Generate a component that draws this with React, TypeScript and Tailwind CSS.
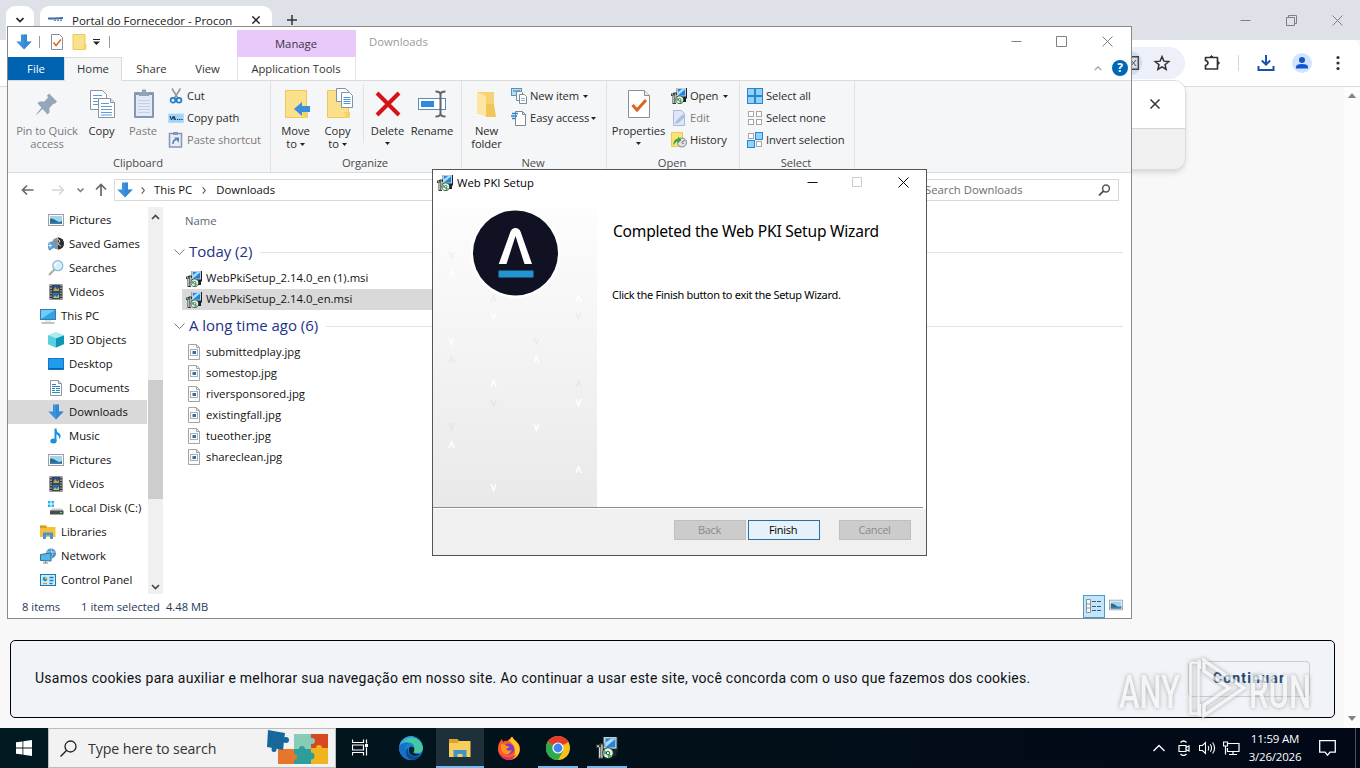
import React from "react";
import type { ReactNode } from "react";

type IconProps = { className?: string };

const MsiIcon = ({ className = "size-4" }: IconProps) => (
  <svg viewBox="0 0 16 16" className={className}>
    <path d="M5.500 0H16v10.500h-1V14h-3V9.500H5.500z" fill="#18242e" />
    <path d="M5.500 0H15v8.500H5.500z" fill="#c3ccd3" />
    <path d="M7 1h7v6.500H7z" fill="#1d86d8" />
    <path d="M7 7.500V4L11 1h3v.5z" fill="#a5dcff" />
    <path d="M0 5.500h1.500L3 4.500h3V7H5v9H1.500V8H0z" fill="#30383a" />
    <path d="M.8 6.200h1.400v1H.8zM2.200 7.500h1V15h-1zM3.800 5.500h1V15h-1z" fill="#d5dad4" />
    <circle cx="8.700" cy="11.700" r="4.200" fill="#27452f" />
    <circle cx="8.700" cy="11.700" r="3.500" fill="#dcefe0" />
    <path d="M8.700 11.700 6 9.500a3.500 3.500 0 0 0-.5 3.500zM8.700 11.700l2.800 2.100a3.500 3.500 0 0 1-2.800 1.400z" fill="#4fae6b" />
    <circle cx="8.700" cy="11.700" r="1.200" fill="#fff" stroke="#27452f" strokeWidth=".7" />
  </svg>
);

const DownArrow = ({ className = "size-4" }: IconProps) => (
  <svg viewBox="0 0 16 16" className={className}>
    <path d="M5 .5h6v7h4.700L8 15.500.3 7.500H5z" fill="#3a92dc" />
    <path d="M8 .5h3v7h4.700L8 15.500z" fill="#2f80cb" opacity=".5" />
  </svg>
);

const PictureIcon = ({ className = "size-4" }: IconProps) => (
  <svg viewBox="0 0 16 16" className={className}>
    <rect x=".5" y="2.500" width="15" height="11" fill="#fff" stroke="#9aa0a6" />
    <rect x="2" y="4" width="12" height="8" fill="#9fd4f5" />
    <path d="M2 6.500Q5 6 8 8.500T14 9v3H2z" fill="#2d6f78" />
    <path d="M2 10.500h12V12H2z" fill="#3a7fc4" />
  </svg>
);

const VideoIcon = () => (
  <svg viewBox="0 0 16 16" className="size-4">
    <rect x="1.500" y=".5" width="13" height="15" fill="#333" />
    <path d="M3 1v14M13 1v14" stroke="#dcdcdc" strokeWidth="1.200" strokeDasharray="1.300 1.300" />
    <rect x="4.500" y="1.500" width="7" height="6" fill="#27538f" />
    <rect x="4.500" y="8.500" width="7" height="6" fill="#2f6da8" />
    <path d="M5 7 7.500 3 9 5.500 11 4V7z" fill="#c9a63c" />
    <path d="M5 14 7 11.500 9 13 11 10.500V14z" fill="#c9b95c" />
  </svg>
);

const GamesIcon = () => (
  <svg viewBox="0 0 16 16" className="size-4">
    <circle cx="10" cy="7.500" r="6" fill="#8c9094" />
    <path d="M10 1.500a6 6 0 0 1 0 12z" fill="#2b2d30" />
    <path d="M9 2.500 12 5l-2 3 3 2" stroke="#d3d8db" fill="none" />
    <path d="M0 8q1-3 4-2.500l3 1 1 6-2-.5-2 1-2 1.500q-2.500 0-2-6.500z" fill="#5b9fd0" />
    <path d="M2 7.500v4M.5 9.500h3.500" stroke="#e4f3fc" />
  </svg>
);

const SearchFolderIcon = () => (
  <svg viewBox="0 0 16 16" className="size-4">
    <path d="M6.500 9.500 1 15" stroke="#a9a9a9" strokeWidth="2" />
    <circle cx="9.800" cy="5.700" r="5" fill="#d7effc" stroke="#8ab4cf" strokeWidth="1.200" />
    <path d="M7 6a3 3 0 0 1 3-3" stroke="#fff" strokeWidth="1.200" fill="none" />
  </svg>
);

const PcIcon = () => (
  <svg viewBox="0 0 16 16" className="size-4">
    <rect x=".5" y="1.500" width="15" height="10" fill="#2fa3e6" stroke="#3a7ca8" />
    <path d="M1 2h14L1 11z" fill="#6ccbf8" />
    <path d="M1.500 15h13" stroke="#7b8b96" />
    <path d="M5 13h6" stroke="#c5cdd2" />
  </svg>
);

const CubeIcon = () => (
  <svg viewBox="0 0 16 16" className="size-4">
    <path d="M0 3.500 8 .5l8 3V12l-8 3.500L0 12z" fill="#2bb8cf" />
    <path d="M0 3.500 8 .5l8 3L8 6.500z" fill="#aeeaf0" />
    <path d="M0 3.500 8 6.500v9L0 12z" fill="#5ad0de" />
    <path d="M16 3.500 8 6.500v9l8-3.500z" fill="#0a98b4" />
  </svg>
);

const DesktopIcon = () => (
  <svg viewBox="0 0 16 16" className="size-4">
    <rect x=".5" y="2.500" width="15" height="11" fill="#1e9df0" stroke="#1877c0" />
    <path d="M1 12.500h14" stroke="#0b5ea8" />
  </svg>
);

const DocIcon = () => (
  <svg viewBox="0 0 16 16" className="size-4">
    <path d="M2.500.5h8l3 3v12h-11z" fill="#fff" stroke="#8f989e" />
    <path d="M4 4.500h4M4 6.500h8M4 8.500h3M8 8.500h4M4 10.500h3M8 10.500h4M4 12.500h8" stroke="#2a86c4" />
    <path d="M10.500.5v3h3" fill="#d7dde1" stroke="#8f989e" />
  </svg>
);

const MusicIcon = () => (
  <svg viewBox="0 0 16 16" className="size-4">
    <path d="M7.500 .5v12" stroke="#1e8fe0" strokeWidth="2" />
    <ellipse cx="5.500" cy="13" rx="3.200" ry="2.500" fill="#1e8fe0" />
    <path d="M8 .5q.5 3.500 3.500 5Q14 8 11 11.500 12 8 8 6z" fill="#1e8fe0" />
  </svg>
);

const DiskIcon = () => (
  <svg viewBox="0 0 16 16" className="size-4">
    <path d="M0 1h2.500v2.500H0zM3.500 1H6v2.500H3.500zM0 4.500h2.500V7H0zM3.500 4.500H6V7H3.500z" fill="#25b5e8" />
    <path d="M4 8.500h10l1.500 2.500H2z" fill="#c9cccf" />
    <rect x="2" y="10.500" width="13.500" height="4" fill="#4a4d50" />
    <path d="M12 12.500h2" stroke="#5fe36a" />
  </svg>
);

const LibraryIcon = () => (
  <svg viewBox="0 0 16 16" className="size-4">
    <path d="M0 1.500h6l1 1.500h8.500v10H0z" fill="#f5c13a" />
    <path d="M0 1.500h6l1 1.500-1 1H0z" fill="#dd9a1c" />
    <path d="M3 15V8.500h10V15h-3v-3.500H6V15z" fill="#4795cf" />
  </svg>
);

const NetworkIcon = () => (
  <svg viewBox="0 0 16 16" className="size-4">
    <circle cx="11" cy="5.500" r="5" fill="#4c93c4" />
    <path d="M11 .5q3 5 0 10M6.500 4h9" stroke="#a8d8f2" fill="none" />
    <path d="M.5 6.500 11 5v8L.5 12.500z" fill="#53b6ea" stroke="#39718f" />
    <path d="M3 15h5M5.500 12.500V15" stroke="#6f8592" />
  </svg>
);

const ControlIcon = () => (
  <svg viewBox="0 0 16 16" className="size-4">
    <rect x=".5" y="2.500" width="15" height="11" fill="#c8ecfb" stroke="#1a7bb9" />
    <circle cx="5" cy="7" r="2.300" fill="#2492d4" />
    <path d="M5 7V4.700A2.300 2.300 0 0 1 7.300 7z" fill="#f6b73c" />
    <path d="M9.500 5.500h4M9.500 8.500h4" stroke="#1a7bb9" strokeWidth="1.300" />
    <path d="M3 11.500h4" stroke="#f08b2c" strokeWidth="1.300" />
    <path d="M9.500 11.500h3" stroke="#1a7bb9" strokeWidth="1.300" />
  </svg>
);

const JpgIcon = () => (
  <svg viewBox="0 0 16 16" className="mb-px size-4">
    <path d="M2.500.5h8l3 3v12h-11z" fill="#fdfdfd" stroke="#a4a4a4" />
    <path d="M10.500.5v3h3" fill="none" stroke="#a4a4a4" />
    <rect x="4.500" y="5.500" width="7" height="6" fill="#fff" stroke="#9fb2c4" />
    <rect x="6.500" y="7" width="3.500" height="3" fill="#3d6c9c" />
  </svg>
);

const CaretDown = ({ className = "" }: IconProps) => (
  <svg viewBox="0 0 5 3" className={`inline-block h-[3px] w-[5px] ${className}`}>
    <path d="M0 0h5L2.500 3z" fill="#222" />
  </svg>
);

const PinIcon = () => (
  <svg viewBox="0 0 32 32" className="size-8">
    <path d="M18 5.500 26 13.500 23.500 16 22.500 15.500 18.500 20 18.500 24.500 16.500 26.500 11.500 21 6 26.500 5 27 5.500 26 10.500 19.500 6.500 15.500 8.500 13.500 13.500 13.500 17 9.500 16 7.500z" fill="#97a5bb" />
  </svg>
);

const CopyIcon = () => (
  <svg viewBox="0 0 32 32" className="size-8">
    <path d="M4.500 2.500h12l4 4v15h-16z" fill="#fff" stroke="#8b939d" />
    <path d="M7 7.500h9M7 10.500h9M7 13.500h9M7 16.500h6" stroke="#5b9bdc" />
    <path d="M12.500 10.500h12l4 4v15h-16z" fill="#fff" stroke="#8b939d" />
    <path d="M24.500 10.500v4h4" fill="#e3e7eb" stroke="#8b939d" />
    <path d="M15 15.500h8M15 18.500h11M15 21.500h11M15 24.500h11M15 27h11" stroke="#5b9bdc" />
  </svg>
);

const PasteIcon = () => (
  <svg viewBox="0 0 32 32" className="size-8">
    <rect x="7" y="4" width="20" height="26" rx="1" fill="#8797b2" />
    <rect x="9" y="7" width="16" height="21" fill="#e3eaf6" />
    <path d="M12 8V4h3V1.500h4V4h3v4z" fill="#95a2b6" />
    <path d="M11 12.500h12M11 15.500h12M11 18.500h12M11 21.500h12M11 24.500h12" stroke="#c3d0e6" />
  </svg>
);

const FolderBase = ({ children }: { children?: ReactNode }) => (
  <svg viewBox="0 0 32 32" className="size-8">
    <path d="M5.500 2.500h21v27h-21z" fill="#fbe08b" stroke="#edc75c" />
    <path d="M22 24h6v6h-4z" fill="#f6d16a" />
    {children}
  </svg>
);

const DeleteIcon = () => (
  <svg viewBox="0 0 32 32" className="size-8">
    <path d="M5 5 27 27M27 5 5 27" stroke="#d5131b" strokeWidth="4" />
  </svg>
);

const RenameIcon = () => (
  <svg viewBox="0 0 32 32" className="size-8">
    <rect x="2.500" y="10.500" width="27" height="11" fill="#fff" stroke="#5b8bb5" />
    <rect x="5" y="13" width="13" height="6" fill="#2f8be0" />
    <path d="M24.500 6v21M19.500 3.500q5 0 5 3 0-3 5-3M19.500 28.500q5 0 5-3 0 3 5 3" stroke="#5b6670" strokeWidth="2" fill="none" />
  </svg>
);

const NewFolderIcon = () => (
  <svg viewBox="0 0 32 32" className="size-8">
    <path d="M6 4h17v22H6z" fill="#f5d375" />
    <path d="M6 4l9 4v21l-9-4z" fill="#fbe6a2" />
    <path d="M15 16h8l2 13H15z" fill="#f0c65c" />
  </svg>
);

const PropertiesIcon = ({ className = "size-8" }: IconProps) => (
  <svg viewBox="0 0 32 32" className={className}>
    <path d="M5.500 2.500h16l5 5v22h-21z" fill="#fff" stroke="#8b8f94" />
    <path d="M21.500 2.500v5h5" fill="#e9ebed" stroke="#8b8f94" />
    <path d="m9.500 17 4.500 5 9-10" stroke="#dd6426" strokeWidth="3" fill="none" />
  </svg>
);

const CheckDocIcon = () => (
  <svg viewBox="0 0 16 16" className="ml-[9px] size-4">
    <path d="M2.500.5h8l3 3v12h-11z" fill="#fff" stroke="#8b8f94" />
    <path d="m4.500 8.500 2.500 3 5-6" stroke="#dd6426" strokeWidth="1.500" fill="none" />
  </svg>
);

const CutIcon = () => (
  <svg viewBox="0 0 16 16" className="size-4">
    <path d="M4 .5 9.800 10M12.500.5 6.500 10" stroke="#8d97a0" strokeWidth="1.500" />
    <circle cx="5" cy="12.300" r="2.400" fill="none" stroke="#1f7fc8" strokeWidth="1.700" />
    <circle cx="11" cy="12.300" r="2.400" fill="none" stroke="#1f7fc8" strokeWidth="1.700" />
  </svg>
);

const CopyPathIcon = () => (
  <svg viewBox="0 0 16 16" className="size-4">
    <rect x=".5" y="4" width="15" height="8.500" fill="#9fd3f7" stroke="#b8def5" />
    <path d="m2 6 1.500 4L5 6.500 6.500 10M6 6l1.500 4" stroke="#0e2f50" fill="none" />
    <path d="M9 9.500h1.200M11.200 9.500h1.200M13.400 9.500h1.200" stroke="#0e2f50" strokeWidth="1.200" />
  </svg>
);

const PasteShortcutIcon = () => (
  <svg viewBox="0 0 16 16" className="size-4">
    <rect x="1.500" y="1.500" width="12" height="13.500" fill="#e7edf7" stroke="#8697b4" strokeWidth="1.500" />
    <path d="M5 0h5v3H5z" fill="#8697b4" />
    <path d="M5 12q0-4 3-4.500" stroke="#5d7dab" strokeWidth="1.500" fill="none" />
    <path d="M6 5.500h5v5z" fill="#5d7dab" />
  </svg>
);

const NewItemIcon = () => (
  <svg viewBox="0 0 16 16" className="size-4">
    <rect x=".5" y=".5" width="10" height="7" fill="#b9def5" stroke="#5a90b5" />
    <path d="M2 3h7" stroke="#2e78b0" />
    <path d="M5.500 3.500h5l1 1v8h-6z" fill="#f3f7fa" stroke="#7e8a94" />
    <path d="M8.500 6.500h5l2 2v7h-7z" fill="#fff" stroke="#7e8a94" />
    <path d="M10 10.500h4M10 12.500h4" stroke="#8db8dc" />
  </svg>
);

const EasyAccessIcon = () => (
  <svg viewBox="0 0 16 16" className="size-4">
    <path d="M4.500 1.500h7l3 3v11h-10z" fill="#fff" stroke="#7f8890" />
    <path d="M11.500 1.500v3h3" fill="none" stroke="#7f8890" />
    <path d="M1 3.500h6M0 6h6M1 8.500h3" stroke="#2a84d2" strokeWidth="1.300" />
  </svg>
);

const EditIcon = () => (
  <svg viewBox="0 0 16 16" className="size-4">
    <path d="M2.500.5h8l3 3v12h-11z" fill="#dfe7f6" stroke="#a9b9d8" />
    <path d="m4 14 1-3 7-7 2.500 2.500-7 6.500z" fill="#aebfe2" />
  </svg>
);

const HistoryIcon = () => (
  <svg viewBox="0 0 16 16" className="size-4">
    <path d="M.5.5h11v14H.5z" fill="#fbe27a" stroke="#efc94a" />
    <circle cx="11" cy="10.500" r="4.500" fill="#dfe3e6" stroke="#7d868d" />
    <path d="M11 10.500 13.500 8M11 10.500l1.500 1.500" stroke="#555" />
    <path d="M2.500 13.500Q2 7 7 6.500V4.500l3.500 3.500L7 11V9Q4.500 9.500 2.500 13.500z" fill="#3aa53c" />
  </svg>
);

const SelectIcon = ({ on }: { on: boolean[] }) => (
  <svg viewBox="0 0 16 16" className="size-4">
    {on.map((v, i) => {
      const s = v ? 7 : 5;
      const o = v ? 0.5 : 1.5;
      return (
        <rect key={i} x={(i % 2) * 8 + o} y={Math.floor(i / 2) * 8 + o} width={s} height={s} fill={v ? "#8fd2fa" : "#fff"} stroke={v ? "#2a86cc" : "#a7a7a7"} />
      );
    })}
  </svg>
);

const Cross = ({ className = "size-[11px]", w = 1 }: IconProps & { w?: number }) => (
  <svg viewBox="0 0 11 11" className={className}>
    <path d="M.5.5 10.500 10.500M10.500.5.5 10.500" stroke="currentColor" strokeWidth={w} />
  </svg>
);

function Big({ icon, label, className = "", dim = false }: { icon: ReactNode; label: ReactNode; className?: string; dim?: boolean }) {
  return (
    <div className={`flex flex-col items-center pt-[3px] ${className}`}>
      {icon}
      <div className={`mt-[4px] text-center leading-[13px] whitespace-nowrap ${dim ? "text-[#7b7b7b]" : "text-[#2b2b2b]"}`}>{label}</div>
    </div>
  );
}

function Small({ icon, label, dim = false, caret = "" }: { icon: ReactNode; label: string; dim?: boolean; caret?: string }) {
  return (
    <div className={`flex h-[22px] items-center gap-[3px] whitespace-nowrap ${dim ? "text-[#7b7b7b]" : "text-[#2b2b2b]"}`}>
      {icon}
      <span>{label}</span>
      {caret && <CaretDown className={caret} />}
    </div>
  );
}

function Group({ name, className = "", children }: { name: string; className?: string; children: ReactNode }) {
  return (
    <div className={`flex flex-col border-r border-[#e1e2e3] ${className}`}>
      <div className="flex h-[69px] pt-1">{children}</div>
      <div className="mt-[5px] pr-[2px] text-center leading-[16px] text-[#4b4b4b]">{name}</div>
    </div>
  );
}

const tree: { label: string; icon: ReactNode; level: 1 | 2; selected?: boolean }[] = [
  { label: "Pictures", icon: <PictureIcon />, level: 2 },
  { label: "Saved Games", icon: <GamesIcon />, level: 2 },
  { label: "Searches", icon: <SearchFolderIcon />, level: 2 },
  { label: "Videos", icon: <VideoIcon />, level: 2 },
  { label: "This PC", icon: <PcIcon />, level: 1 },
  { label: "3D Objects", icon: <CubeIcon />, level: 2 },
  { label: "Desktop", icon: <DesktopIcon />, level: 2 },
  { label: "Documents", icon: <DocIcon />, level: 2 },
  { label: "Downloads", icon: <DownArrow />, level: 2, selected: true },
  { label: "Music", icon: <MusicIcon />, level: 2 },
  { label: "Pictures", icon: <PictureIcon />, level: 2 },
  { label: "Videos", icon: <VideoIcon />, level: 2 },
  { label: "Local Disk (C:)", icon: <DiskIcon />, level: 2 },
  { label: "Libraries", icon: <LibraryIcon />, level: 1 },
  { label: "Network", icon: <NetworkIcon />, level: 1 },
  { label: "Control Panel", icon: <ControlIcon />, level: 1 },
];

function FileGroup({ title, files, selected }: { title: string; files: string[]; selected?: string }) {
  return (
    <div>
      <div className="flex h-[31px] items-center pb-px pl-[11px] text-[#1e3287]">
        <svg viewBox="0 0 11 7" className="h-[7px] w-[11px]"><path d="M.5.5 5.500 5.500 10.500.5" fill="none" stroke="#777" /></svg>
        <span className="ml-1 pb-[2px] text-[15px] leading-5 tracking-[-0.020px] whitespace-nowrap">{title}</span>
        <div className="ml-2 mr-2 h-px flex-1 bg-[#e2e2e2]" />
      </div>
      {files.map((f) => (
        <div key={f} className={`mr-[260px] ml-[19px] flex h-[21px] items-center gap-[4px] pl-[4px] ${f === selected ? "bg-[#d9d9d9]" : ""}`}>
          {f.endsWith("msi") ? <MsiIcon /> : <JpgIcon />}
          <span>{f}</span>
        </div>
      ))}
    </div>
  );
}

function Browser() {
  return (
    <div className="flex h-[728px] flex-col bg-[#f8f8f8]">
      <div className="flex h-10 shrink-0 bg-[#dee1e8] pl-[6px] pt-[6px]">
        <div className="flex h-[34px] w-7 items-start justify-center rounded-t-[9px] bg-white pt-[11px]">
          <svg viewBox="0 0 8 6" className="h-[6px] w-2"><path d="M.5 1 4 4.500 7.500 1" fill="none" stroke="#222" strokeWidth="1.700" /></svg>
        </div>
        <div className="ml-[6px] flex h-[34px] w-[232px] items-start rounded-t-[9px] bg-white pt-[6px] pl-2">
          <svg viewBox="0 0 16 16" className="size-4"><path d="M0 6.500h7l8-.5" stroke="#3c6ea8" strokeWidth="1.800" /><path d="M6 8.300h9" stroke="#6f8fae" strokeWidth="1.500" strokeDasharray="2 1" /></svg>
          <span className="ml-2 w-[180px] text-[11.500px] leading-[17px] tracking-[-0.030px] whitespace-nowrap text-[#222]">Portal do Fornecedor - Procon</span>
          <Cross className="mt-[4px] size-2 text-[#222]" w={2} />
        </div>
        <svg viewBox="0 0 10 10" className="mt-[9px] ml-[15px] size-[10px]"><path d="M5 0v10M0 5h10" stroke="#333" strokeWidth="1.500" /></svg>
        <div className="ml-auto flex items-start pr-[17px] pt-[9px] text-[#7c7f85]">
          <svg viewBox="0 0 11 11" className="size-[11px]"><path d="M.5 5.500h10" stroke="currentColor" /></svg>
          <svg viewBox="0 0 11 11" className="ml-[35px] size-[11px]"><path d="M.5 2.500h8v8h-8zM2.500 2.500v-2h8v8h-2" fill="none" stroke="currentColor" /></svg>
          <Cross className="ml-[35px] size-[11px]" />
        </div>
      </div>
      <div className="flex h-[47px] shrink-0 items-center justify-end rounded-tr-lg border-b border-[#dcdcdc] bg-white">
        <div className="flex h-8 w-[200px] items-center justify-end rounded-full bg-[#edf0f8] pr-[14px]">
          <div className="mr-[11px] flex size-6 items-center justify-end rounded-full bg-[#d3dcea] pr-[3px]">
            <svg viewBox="0 0 12 14" className="h-[14px] w-3"><path d="M.7.700h10.600v12.600H.7z" fill="none" stroke="#444" strokeWidth="1.400" /><path d="m4 4 5 6M9 4l-5 6" stroke="#555" /></svg>
          </div>
          <svg viewBox="0 0 24 24" className="size-[18px]"><path d="m12 3.500 2.500 6 6.500.5-5 4.300 1.500 6.300L12 17.200l-5.500 3.400 1.500-6.300L3 10l6.500-.5z" fill="none" stroke="#333" strokeWidth="2" /></svg>
        </div>
        <svg viewBox="0 0 18 18" className="ml-[18px] size-[18px]"><path d="M2.500 3.500h12v11.500h-12v-3.500q2.500-.8 2.500-2.500t-2.500-2.500z" fill="none" stroke="#333" strokeWidth="1.700" strokeLinejoin="round" /><path d="M7 3q1.500-3 3 0zM15 7.500q3 1.500 0 3z" fill="#333" stroke="#333" /></svg>
        <div className="ml-[17px] h-4 w-px bg-[#d3d6ea]" />
        <svg viewBox="0 0 18 18" className="ml-[18px] size-[18px]"><path d="M9 1v9.500M4.800 6.500 9 10.700l4.200-4.200M1.500 12v4h15v-4" fill="none" stroke="#1c4fb0" strokeWidth="2" /></svg>
        <div className="ml-[17px] size-5 rounded-full bg-[#d3e3fd]">
          <svg viewBox="0 0 20 20" className="size-5"><circle cx="10" cy="7" r="3" fill="#1155cc" /><path d="M4 15.500v-1.500q0-3 6-3t6 3v1.500z" fill="#1155cc" /></svg>
        </div>
        <svg viewBox="0 0 4 16" className="mr-[20px] ml-[24px] h-4 w-1"><circle cx="2" cy="2.500" r="1.600" fill="#333" /><circle cx="2" cy="8" r="1.600" fill="#333" /><circle cx="2" cy="13.500" r="1.600" fill="#333" /></svg>
      </div>
      <div className="flex flex-1">
        <div className="flex flex-1 flex-col justify-end pb-[10px] pl-[10px]">
          <div className="mr-[9px] flex h-[78px] items-center justify-between rounded-[5px] border border-black bg-[#f0f3f7] pr-6 pl-6 font-['Roboto',sans-serif] text-[14px] text-[#111]">
            <span className="pb-[2px] tracking-[0.250px] whitespace-nowrap">Usamos cookies para auxiliar e melhorar sua navegação em nosso site. Ao continuar a usar este site, você concorda com o uso que fazemos dos cookies.</span>
            <span className="flex h-9 w-[122px] items-center justify-center rounded border border-[#c9cdd2] pb-[2px] font-bold tracking-[1.200px] text-[#1b4370]">Continuar</span>
          </div>
        </div>
        <div className="flex w-4 flex-col items-center justify-between bg-[#fcfcfc] pt-[6px] pb-[7px]">
          <svg viewBox="0 0 10 6" className="h-[5px] w-[10px]"><path d="M0 6 5 0l5 6z" fill="#858585" /></svg>
          <svg viewBox="0 0 10 6" className="h-[5px] w-[10px]"><path d="M0 0 5 6l5-6z" fill="#858585" /></svg>
        </div>
      </div>
    </div>
  );
}

function Explorer() {
  return (
    <div className="absolute top-[26px] left-[7px] flex h-[593px] w-[1125px] flex-col border border-[#8a8a8a] bg-white text-[#111]">
      <div className="flex h-[30px] shrink-0">
        <div className="flex w-[229px] items-center pl-[8px]">
          <DownArrow className="size-4" />
          <div className="ml-[7px] h-3 w-px bg-[#9a9a9a]" />
          <CheckDocIcon />
          <svg viewBox="0 0 16 16" className="ml-[7px] size-4"><path d="M1 .5h12v15H1z" fill="#fbe08b" stroke="#edc75c" /><path d="M11 10h3.500v5.500H12z" fill="#f6d16a" /></svg>
          <svg viewBox="0 0 7 6" className="ml-[5px] h-[6px] w-[7px]"><path d="M0 0h7v1H0zM0 2.500h7L3.500 6z" fill="#222" /></svg>
          <div className="ml-[9px] h-3 w-px bg-[#9a9a9a]" />
        </div>
        <div className="mt-[3px] flex w-[119px] items-center justify-center bg-[#e8c9f9] pt-px pr-px text-[#3d3347]">Manage</div>
        <div className="flex items-center pl-[13px] text-[#9a9a9a]">Downloads</div>
        <div className="ml-auto flex items-center pr-[18px] pb-px text-[#808080]">
          <svg viewBox="0 0 11 11" className="size-[11px]"><path d="M.5 5.500h10" stroke="currentColor" /></svg>
          <svg viewBox="0 0 11 11" className="ml-[34px] size-[11px]"><path d="M.5.5h10v10H.5z" fill="none" stroke="currentColor" /></svg>
          <Cross className="ml-[35px] size-[11px]" />
        </div>
      </div>
      <div className="flex h-[24px] shrink-0 border-b border-[#dadbdc] text-[#333]">
        <div className="flex w-14 items-center justify-center bg-[#0063b1] pt-px text-white">File</div>
        <div className="-mb-px flex w-[58px] items-center justify-center border border-b-0 border-[#dadbdc] bg-[#f5f6f7]">Home</div>
        <div className="flex w-[59px] items-center justify-center pt-px">Share</div>
        <div className="flex w-[53px] items-center justify-center pt-px">View</div>
        <div className="ml-[3px] flex w-[119px] items-center justify-center border-x border-[#e8e0ec] pt-px pr-px text-[11.200px] whitespace-nowrap">Application Tools</div>
        <div className="ml-auto flex items-center pr-[3px] pb-px">
          <svg viewBox="0 0 9 6" className="mr-[10px] h-[5px] w-2"><path d="M.5 5 4.500 1l4 4" fill="none" stroke="#999" strokeWidth="1.300" /></svg>
          <div className="flex size-4 items-center justify-center rounded-full bg-[#0067b8] text-[12px] font-bold text-white">?</div>
        </div>
      </div>
      <div className="flex h-[92px] shrink-0 border-b border-[#dadbdc] bg-[#f5f6f7] text-[11.200px] tracking-[-0.080px]">
        <Group name="Clipboard" className="w-[263px]">
          <Big className="w-[78px]" dim icon={<PinIcon />} label={<>Pin to Quick<br />access</>} />
          <Big className="w-[31px]" icon={<CopyIcon />} label="Copy" />
          <Big className="w-[52px]" dim icon={<PasteIcon />} label="Paste" />
          <div className="-ml-px">
            <Small icon={<CutIcon />} label="Cut" />
            <Small icon={<CopyPathIcon />} label="Copy path" />
            <Small dim icon={<PasteShortcutIcon />} label="Paste shortcut" />
          </div>
        </Group>
        <Group name="Organize" className="w-[191px]">
          <Big className="w-[49px]" icon={<FolderBase><path d="M30 18v6h-8v4l-8-7 8-7v4z" fill="#3a8fdc" /></FolderBase>} label={<>Move<br />to <CaretDown className="mb-[2px]" /></>} />
          <Big className="w-[35px]" icon={<FolderBase><path d="M14.500.5h9l3 3v10h-12z" fill="#fff" stroke="#7f93a8" /><path d="M19.500 4.500h8l3 3v12h-11z" fill="#fff" stroke="#7f93a8" /><path d="M21.500 9.500h7M21.500 11.500h7M21.500 13.500h7M21.500 15.500h7" stroke="#4e95dc" /></FolderBase>} label={<>Copy<br />to <CaretDown className="mb-[2px]" /></>} />
          <div className="mx-1 ml-2 h-[58px] w-px bg-[#e1e2e3]" />
          <Big className="-ml-1 w-[47px]" icon={<DeleteIcon />} label={<>Delete<br /><CaretDown className="mb-[3px]" /></>} />
          <Big className="w-[42px]" icon={<RenameIcon />} label="Rename" />
        </Group>
        <Group name="New" className="w-[145px]">
          <Big className="w-[49px]" icon={<NewFolderIcon />} label={<>New<br />folder</>} />
          <div>
            <Small icon={<NewItemIcon />} label="New item" caret="ml-px" />
            <Small icon={<EasyAccessIcon />} label="Easy access" caret="-ml-px" />
          </div>
        </Group>
        <Group name="Open" className="w-[133px]">
          <Big className="w-[63px]" icon={<PropertiesIcon />} label={<>Properties<br /><CaretDown className="mb-[3px]" /></>} />
          <div className="pl-px">
            <Small icon={<MsiIcon />} label="Open" caret="ml-[2px]" />
            <Small dim icon={<EditIcon />} label="Edit" />
            <Small icon={<HistoryIcon />} label="History" />
          </div>
        </Group>
        <Group name="Select" className="w-[115px]">
          <div className="pl-[7px]">
            <Small icon={<SelectIcon on={[true, true, true, true]} />} label="Select all" />
            <Small icon={<SelectIcon on={[false, false, false, false]} />} label="Select none" />
            <Small icon={<SelectIcon on={[false, true, true, false]} />} label="Invert selection" />
          </div>
        </Group>
      </div>
      <div className="flex h-[34px] shrink-0 items-center pl-[13px] text-[#111]">
        <svg viewBox="0 0 14 12" className="h-3 w-[14px]"><path d="M12.500 6H1.500M6 1.500 1.500 6 6 10.500" fill="none" stroke="#6a6a6a" strokeWidth="1.700" /></svg>
        <svg viewBox="0 0 14 12" className="ml-4 h-3 w-[14px]"><path d="M1 6h11M8 1.500 12.500 6 8 10.500" fill="none" stroke="#d5d5d5" strokeWidth="1.300" /></svg>
        <svg viewBox="0 0 7 5" className="ml-[12px] h-[5px] w-[7px]"><path d="M.5.5l3 3 3-3" fill="none" stroke="#777" strokeWidth="1.500" /></svg>
        <svg viewBox="0 0 12 14" className="ml-[11px] h-[14px] w-3"><path d="M6 13V2M1 6.500l5-5 5 5" fill="none" stroke="#666" strokeWidth="1.700" /></svg>
        <div className="ml-[7px] flex h-[22px] w-[797px] items-center border border-[#d9d9d9] pl-[2px]">
          <DownArrow />
          <svg viewBox="0 0 4 8" className="ml-[8px] h-[7px] w-[4px]"><path d="M.5.500 3.500 4 .5 7.500" fill="none" stroke="#555" strokeWidth="1.300" /></svg>
          <span className="ml-[9px]">This PC</span>
          <svg viewBox="0 0 4 8" className="ml-[10px] h-[7px] w-[4px]"><path d="M.5.500 3.500 4 .5 7.500" fill="none" stroke="#555" strokeWidth="1.300" /></svg>
          <span className="ml-[10px]">Downloads</span>
        </div>
        <div className="flex h-[22px] w-[208px] items-center justify-between border border-l-0 border-[#d9d9d9] pr-[7px] pl-[14px] text-[#6d6d6d]">
          <span>Search Downloads</span>
          <svg viewBox="0 0 13 12" className="h-3 w-[13px]"><circle cx="8" cy="4.500" r="3.400" fill="none" stroke="#555" strokeWidth="1.500" /><path d="M5.500 7 1 11.500" stroke="#555" strokeWidth="1.800" /></svg>
        </div>
      </div>
      <div className="flex h-[387px] shrink-0">
        <div className="w-[139px] pt-px">
          {tree.map((t, i) => (
            <div key={i} className={`flex h-6 items-center gap-[5px] whitespace-nowrap ${t.level === 2 ? "pl-10" : "pl-8"} ${t.selected ? "bg-[#d9d9d9]" : ""}`}>
              {t.icon}
              <span>{t.label}</span>
            </div>
          ))}
        </div>
        <div className="ml-px flex w-[15px] flex-col items-center bg-[#f0f0f0] pt-[7px] pb-[4px]">
          <svg viewBox="0 0 9 6" className="h-[6px] w-[9px]"><path d="M1 5 4.500 1.500 8 5" fill="none" stroke="#444" strokeWidth="1.600" /></svg>
          <div className="mt-[160px] h-[119px] w-full bg-[#cdcdcd]" />
          <svg viewBox="0 0 9 6" className="mt-auto h-[6px] w-[9px]"><path d="M1 1 4.500 4.500 8 1" fill="none" stroke="#444" strokeWidth="1.600" /></svg>
        </div>
        <div className="flex-1">
          <div className="flex h-[30px] items-center pb-px pl-[22px] text-[#5b6477]">Name</div>
          <FileGroup title="Today (2)" files={["WebPkiSetup_2.14.0_en (1).msi", "WebPkiSetup_2.14.0_en.msi"]} selected="WebPkiSetup_2.14.0_en.msi" />
          <div className="h-px" />
          <FileGroup title="A long time ago (6)" files={["submittedplay.jpg", "somestop.jpg", "riversponsored.jpg", "existingfall.jpg", "tueother.jpg", "shareclean.jpg"]} />
        </div>
      </div>
      <div className="flex flex-1 items-center pl-[14px] text-[11.200px] text-[#1e395b]">
        <span className="pt-[2px]">8 items</span>
        <span className="ml-[21px] pt-[2px]">1 item selected</span>
        <span className="ml-[6px] pt-[2px]">4.48 MB</span>
        <div className="ml-auto flex items-center gap-[4px] self-stretch pr-2">
          <div className="flex h-[23px] w-[22px] items-center justify-center border border-[#4a9ccb] bg-[#c4e5f8]">
            <svg viewBox="0 0 16 14" className="h-[14px] w-4"><path d="M.5.5h4v13h-4zM.5 5h4M.5 9h4" fill="#fff" stroke="#8b8f94" /><path d="M6 2.500h4M11 2.500h4M6 7.500h4M11 7.500h4M6 11.500h4M11 11.500h4" stroke="#2b5f8f" /></svg>
          </div>
          <PictureIcon className="mb-[2px] size-[14px]" />
        </div>
      </div>
    </div>
  );
}

const marks: { x: number; y: number; up: boolean; light: boolean }[] = [
  { x: 18, y: 47, up: false, light: false },
  { x: 18, y: 66, up: true, light: true },
  { x: 60, y: 91, up: true, light: false },
  { x: 60, y: 108, up: false, light: true },
  { x: 145, y: 91, up: true, light: true },
  { x: 145, y: 108, up: false, light: false },
  { x: 18, y: 133, up: false, light: true },
  { x: 18, y: 152, up: true, light: false },
  { x: 103, y: 133, up: false, light: false },
  { x: 103, y: 152, up: true, light: true },
  { x: 60, y: 176, up: true, light: true },
  { x: 60, y: 195, up: false, light: false },
  { x: 145, y: 176, up: true, light: false },
  { x: 145, y: 194, up: false, light: true },
  { x: 18, y: 218, up: false, light: false },
  { x: 18, y: 237, up: true, light: true },
  { x: 103, y: 219, up: false, light: true },
  { x: 145, y: 262, up: true, light: true },
  { x: 60, y: 279, up: false, light: true },
];

function Wizard() {
  return (
    <div className="absolute top-[169px] left-[432px] flex h-[387px] w-[495px] flex-col border border-[#555] bg-white text-[#111]">
      <div className="flex h-[25px] shrink-0 items-center pl-1">
        <MsiIcon />
        <span className="ml-1 text-[11.300px] leading-[15px] text-black">Web PKI Setup</span>
        <div className="ml-auto flex items-center pr-[17px]">
          <svg viewBox="0 0 11 11" className="size-[11px]"><path d="M.5 5.500h10" stroke="#111" /></svg>
          <svg viewBox="0 0 11 11" className="ml-[34px] size-[11px]"><path d="M.5.5h9v9h-9z" fill="none" stroke="#ccc" /></svg>
          <Cross className="ml-[35px] size-[11px] text-black" />
        </div>
      </div>
      <div className="mr-[3px] flex h-[313px] shrink-0 border-b border-[#8c8c8c] pt-[13px]">
        <svg viewBox="0 0 164 299" className="h-[299px] w-[164px] bg-linear-to-b from-[#fdfdfd] to-[#e9e9e9]">
          {marks.map((m, i) => (
            <path key={i} d={m.up ? "M-2.500 3 0-3 2.500 3" : "M-2.500-3 0 3 2.500-3"} transform={`translate(${m.x + 0.5} ${m.y})`} fill="none" stroke={m.light ? "#fff" : "#000"} strokeOpacity={m.light ? 0.9 : 0.04} strokeWidth="1.700" />
          ))}
          <circle cx="82.500" cy="45" r="45" fill="#fff" />
          <circle cx="82.500" cy="45" r="42.500" fill="#101223" />
          <path d="M65.800 56 77.500 23.500Q79 20 82.500 20T87.500 23.500L99 56H91.500L82.500 28 73.500 56z" fill="#fff" />
          <path d="M65.500 62.500h35v7h-35z" fill="#2394d2" />
        </svg>
        <div className="pl-[16px] font-['Noto_Sans',sans-serif] whitespace-nowrap text-black">
          <div className="pt-[11px] text-[15.600px] leading-[24px] tracking-[-0.240px]">Completed the Web PKI Setup Wizard</div>
          <div className="-ml-px pt-[43px] text-[11px] leading-[18px] tracking-[-0.300px]">Click the Finish button to exit the Setup Wizard.</div>
        </div>
      </div>
      <div className="flex flex-1 justify-end border-t border-white bg-[#f0f0f0] pt-[11px] pr-[15px] text-[11px] tracking-[-0.300px]">
        <div className="flex h-5 w-[72px] items-center justify-center border border-[#bfbfbf] bg-[#ccc] pr-px text-[#8a8a8a]">Back</div>
        <div className="ml-[2px] flex h-5 w-[72px] items-center justify-center border border-[#2a6fa8] bg-[#e5f1fb] pr-[2px] text-black">Finish</div>
        <div className="ml-[19px] flex h-5 w-[72px] items-center justify-center border border-[#bfbfbf] bg-[#ccc] pr-px text-[#8a8a8a]">Cancel</div>
      </div>
    </div>
  );
}

function Watermark() {
  return (
    <svg viewBox="0 0 200 70" className="absolute top-[654px] left-[1115px] h-[70px] w-[200px] overflow-visible opacity-70 drop-shadow-[0_0_2px_#8a8a8a]">
      <text x="4" y="54" textLength="61" lengthAdjust="spacingAndGlyphs" fontFamily="Roboto" fontSize="47" fontWeight="500" fill="#f6f6f6">ANY</text>
      <path d="M84.500 6v9M84.500 50v12M89 6.500 129 34 89 61.500V51l25-17-25-17z" fill="none" stroke="#f6f6f6" strokeWidth="3.500" />
      <path d="M75.500 8.500h8v51h-8z" fill="none" stroke="#f6f6f6" strokeWidth="2.500" />
      <text x="134" y="54" textLength="62" lengthAdjust="spacingAndGlyphs" fontFamily="Roboto" fontSize="47" fontWeight="500" fill="#f6f6f6">RUN</text>
    </svg>
  );
}

function TaskCell({ children, className = "", line = "" }: { children: ReactNode; className?: string; line?: string }) {
  return (
    <div className={`flex h-10 w-12 flex-col items-center ${className}`}>
      <div className="flex h-[38px] items-center pt-px">{children}</div>
      <div className={`h-[2px] ${line}`} />
    </div>
  );
}

function Taskbar() {
  return (
    <div className="flex h-10 items-center bg-linear-to-r from-[#011a22] via-[#021019] to-[#020818] text-white">
      <div className="flex w-12 justify-center">
        <svg viewBox="0 0 16 16" className="size-4"><path d="M0 2.300 6.500 1.400v6.100H0zM7.300 1.300 16 0v7.500H7.300zM0 8.400h6.500v6.200L0 13.700zM7.300 8.400H16V16l-8.700-1.200z" fill="#fff" /></svg>
      </div>
      <div className="flex h-10 w-72 items-center border border-[#bdbdbd] bg-[#f2f2f2] pl-[11px] text-[#333]">
        <svg viewBox="0 0 17 17" className="size-[17px]"><circle cx="10.500" cy="6.500" r="5.500" fill="none" stroke="#222" strokeWidth="1.300" /><path d="M6.500 10.500.5 16.500" stroke="#222" strokeWidth="1.400" /></svg>
        <span className="ml-[11px] pt-px text-[14.200px] tracking-[-0.120px] whitespace-nowrap">Type here to search</span>
        <svg viewBox="0 0 64 36" className="ml-auto mr-[6px] h-9 w-16">
          <path d="M13 19h16v15H13z" fill="#e5762c" />
          <path d="M29 19h17v15H29z" fill="#2f9d9a" />
          <path d="M46 18h17v16H46z" fill="#f0b41e" />
          <path d="M46 4h17v14H46z" fill="#d8481f" />
          <path d="M29 4h17v15H29z" fill="#86cdb9" />
          <circle cx="29" cy="27" r="3" fill="#e5762c" /><circle cx="46" cy="26" r="3.500" fill="#2f9d9a" /><circle cx="54" cy="18" r="3" fill="#f0b41e" /><circle cx="47" cy="11" r="3" fill="#86cdb9" /><circle cx="37" cy="19" r="3" fill="#2f9d9a" />
          <path d="M3 0 20 3 18 20 2 17z" fill="#17679b" /><circle cx="21" cy="10" r="3" fill="#17679b" /><circle cx="9" cy="19.500" r="2.500" fill="#17679b" />
        </svg>
      </div>
      <TaskCell>
        <svg viewBox="0 0 17 16" className="size-[17px]"><path d="M.5 0v3h11V0M.5 16v-3h11v3M.5 5.500h11v5H.5zM14.500 0v4M14.500 8v8" fill="none" stroke="#fff" strokeWidth="1.200" /><path d="M13 4.500h3v3h-3z" fill="#fff" /></svg>
      </TaskCell>
      <TaskCell className="ml-[3px]">
        <svg viewBox="0 0 24 24" className="size-6">
          <circle cx="12" cy="12" r="12" fill="#1583d2" />
          <path d="M.5 10A12 12 0 0 1 24 12q0 5-5.500 5-4.500 0-4.500-2.200 1.500-1 1.500-3Q15 7 9.500 6.500 3 6 .5 10z" fill="#46c8a0" />
          <path d="M.5 10A12 12 0 0 1 15 .5Q7 2 3 8z" fill="#35a8e0" />
          <path d="M.5 10Q3 6 9.500 6.500 6 9 6.500 14T14 24Q5 25 1 16.500-.5 13 .5 10z" fill="#1b6fc6" />
          <path d="M9 12q-1.500 7 6 8.500 4 .5 7-2Q19.500 24 13 24 7 22.500 6.800 16 7 13 9 12z" fill="#0d4a92" />
          <path d="M10 12q2-3 5 0 1 3-1 4.500 3 2.500 8 1-4 3.500-8.500 2T10 12z" fill="#062230" />
        </svg>
      </TaskCell>
      <TaskCell className="ml-px bg-[#1e3039]" line="w-12 bg-[#76b9ed]">
        <svg viewBox="0 0 22 20" className="h-5 w-[22px]"><path d="M0 1h8l2 2h11.500v16H0z" fill="#f9cf5c" /><path d="M0 1h8l2 2-1 2H0z" fill="#e0a22b" /><path d="M4.500 19v-7h13v7h-4v-3h-5v3z" fill="#3f94c9" /></svg>
      </TaskCell>
      <TaskCell className="ml-px">
        <svg viewBox="0 0 24 24" className="size-6">
          <path d="M1 13Q1 7 5 3l1 3q2-2 4-1l5-4q1 2 4 4 4 3 4 8a11 11 0 0 1-22 0z" fill="#ff5a2c" />
          <path d="M15 .5Q16 3 19.500 6 24 11 22 17q-3 6-9 6.500 6-4 5-10Q17 8 12 5z" fill="#ffc928" />
          <circle cx="11.500" cy="13" r="5.500" fill="#7a3bc9" />
          <path d="M4 8q4 0 6 2l3 1-4 2q2 3 6 1-2 5-7 4-5-2-4-10z" fill="#ff9420" />
          <path d="M1.500 14q2 7 9 7.500 6 0 9-4-2 6-8.500 6.500Q3 23 1.500 14z" fill="#e62a6e" />
        </svg>
      </TaskCell>
      <TaskCell className="ml-px" line="w-10 bg-[#76b9ed]">
        <svg viewBox="0 0 24 24" className="size-6">
          <circle cx="12" cy="12" r="12" fill="#fbc116" />
          <path d="M12 12 1.600 6A12 12 0 0 1 22.400 6z" fill="#e33b2e" />
          <path d="M12 12 1.600 6A12 12 0 0 0 12 24l5.200-9z" fill="#2da94f" />
          <circle cx="12" cy="12" r="5.600" fill="#fff" /><circle cx="12" cy="12" r="4.400" fill="#4084f3" />
        </svg>
      </TaskCell>
      <TaskCell className="ml-px" line="w-10 bg-[#76b9ed]"><MsiIcon className="size-[22px]" /></TaskCell>
      <div className="ml-auto flex items-center">
        <svg viewBox="0 0 12 8" className="h-2 w-3"><path d="M.5 7 6 1.500 11.500 7" fill="none" stroke="#fff" strokeWidth="1.300" /></svg>
        <svg viewBox="0 0 12 16" className="ml-[13px] h-4 w-3"><path d="M1 5.500h7v6H1zM8 7.500l3-1.500v5L8 9.500M2.500 2.500Q5.500-.5 8.500 2.500M2.500 14q3 3 6 0" fill="none" stroke="#fff" strokeWidth="1.200" /></svg>
        <svg viewBox="0 0 17 14" className="ml-[9px] h-[14px] w-[17px]"><path d="M.5 4.500h3l3-3v11l-3-3h-3zM9 5q1.500 2 0 4.500M11.300 3.300q2.500 3.700 0 7.400M13.600 1.500q4 5.500 0 11" fill="none" stroke="#fff" strokeWidth="1.100" /></svg>
        <svg viewBox="0 0 17 14" className="ml-[7px] h-[14px] w-[17px]"><path d="M5 2.500h11v8H4.500V7M6 13.500h8M10 10.500v3M.5 1h4v4h-4zM2.500 5v8.500" fill="none" stroke="#fff" strokeWidth="1.200" /></svg>
        <div className="ml-[5px] w-[60px] text-center text-[11.500px] leading-[18px] tracking-[-0.200px] whitespace-nowrap">11:59 AM<br />3/26/2026</div>
        <svg viewBox="0 0 17 16" className="ml-[14px] h-4 w-[17px]"><path d="M.7.700h15.600v11.500h-5.300l-2.500 3-2.500-3H.7z" fill="none" stroke="#fff" strokeWidth="1.300" /></svg>
        <div className="mr-1 ml-[19px] h-10 w-px bg-[#4a525e]" />
      </div>
    </div>
  );
}

export default function App() {
  return (
    <div className="relative h-[768px] w-[1360px] overflow-hidden font-['Open_Sans','Noto_Sans',sans-serif] text-[11.300px]">
      <Browser />
      <div className="absolute top-[80px] left-[900px] flex h-[90px] w-[286px] flex-col overflow-hidden rounded-xl border border-[#dedede] bg-[#f0f0f0] shadow-md">
        <div className="flex h-12 items-center justify-end border-b border-[#d5d5d5] bg-white pr-[25px] pb-px text-[#333]">
          <Cross className="size-[10px]" w={1.6} />
        </div>
      </div>
      <Explorer />
      <Wizard />
      <Watermark />
      <Taskbar />
    </div>
  );
}
